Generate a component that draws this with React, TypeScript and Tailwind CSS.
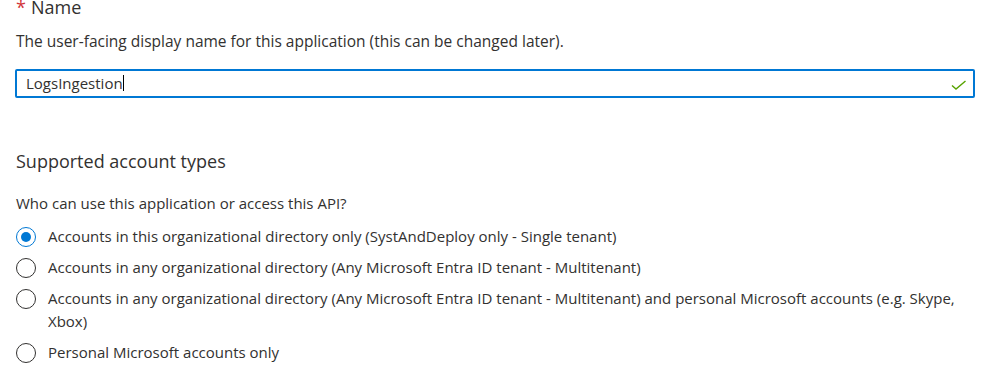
import { useState } from 'react';

const accountTypes = [
  'Accounts in this organizational directory only (SystAndDeploy only - Single tenant)',
  'Accounts in any organizational directory (Any Microsoft Entra ID tenant - Multitenant)',
  'Accounts in any organizational directory (Any Microsoft Entra ID tenant - Multitenant) and personal Microsoft accounts (e.g. Skype, Xbox)',
  'Personal Microsoft accounts only',
];

function Radio({ checked }: { checked: boolean }) {
  return (
    <span
      className={
        checked
          ? 'flex h-5 w-5 shrink-0 items-center justify-center rounded-full border border-[#0078d4]'
          : 'flex h-5 w-5 shrink-0 items-center justify-center rounded-full border border-[#323130]'
      }
    >
      {checked && <span className="h-[10px] w-[10px] rounded-full bg-[#0078d4]" />}
    </span>
  );
}

export default function App() {
  const [selected, setSelected] = useState(0);

  return (
    <div
      className="h-[381px] w-[997px] overflow-hidden bg-white pl-4 pr-[22px] text-[#323130]"
      style={{ fontFamily: '"Open Sans", "Noto Sans", sans-serif' }}
    >
      <div className="text-[18px] leading-[15px]">
        <span className="mr-[5px] text-[#d13438]">*</span>Name
      </div>
      <p className="mt-4 text-[15.5px] leading-5">
        The user-facing display name for this application (this can be changed later).
      </p>

      <div className="-ml-px mt-[18px] flex h-[29px] items-center rounded-[2px] border-2 border-[#0078d4] pb-px pl-[9px] pr-[6px]">
        <span className="text-[15px] leading-[23px]">LogsIngestion</span>
        <span className="h-4 w-px bg-black" />
        <svg className="ml-auto mt-[3px]" width="16" height="10" viewBox="0 0 16 10" fill="none">
          <path d="M1 5.5 L5 9 L14.5 1" stroke="#57a300" strokeWidth="1.4" />
        </svg>
      </div>

      <h2 className="mt-[51px] text-[18px] font-normal leading-6">Supported account types</h2>
      <p className="mt-5 text-[15px] leading-5">Who can use this application or access this API?</p>

      <div className="mt-3 flex flex-col gap-2">
        {accountTypes.map((label, i) => (
          <label key={i} className="flex cursor-pointer items-start gap-3" onClick={() => setSelected(i)}>
            <span className="flex h-[23px] items-center">
              <Radio checked={selected === i} />
            </span>
            <span className="text-[15px] leading-[23px]">{label}</span>
          </label>
        ))}
      </div>
    </div>
  );
}
